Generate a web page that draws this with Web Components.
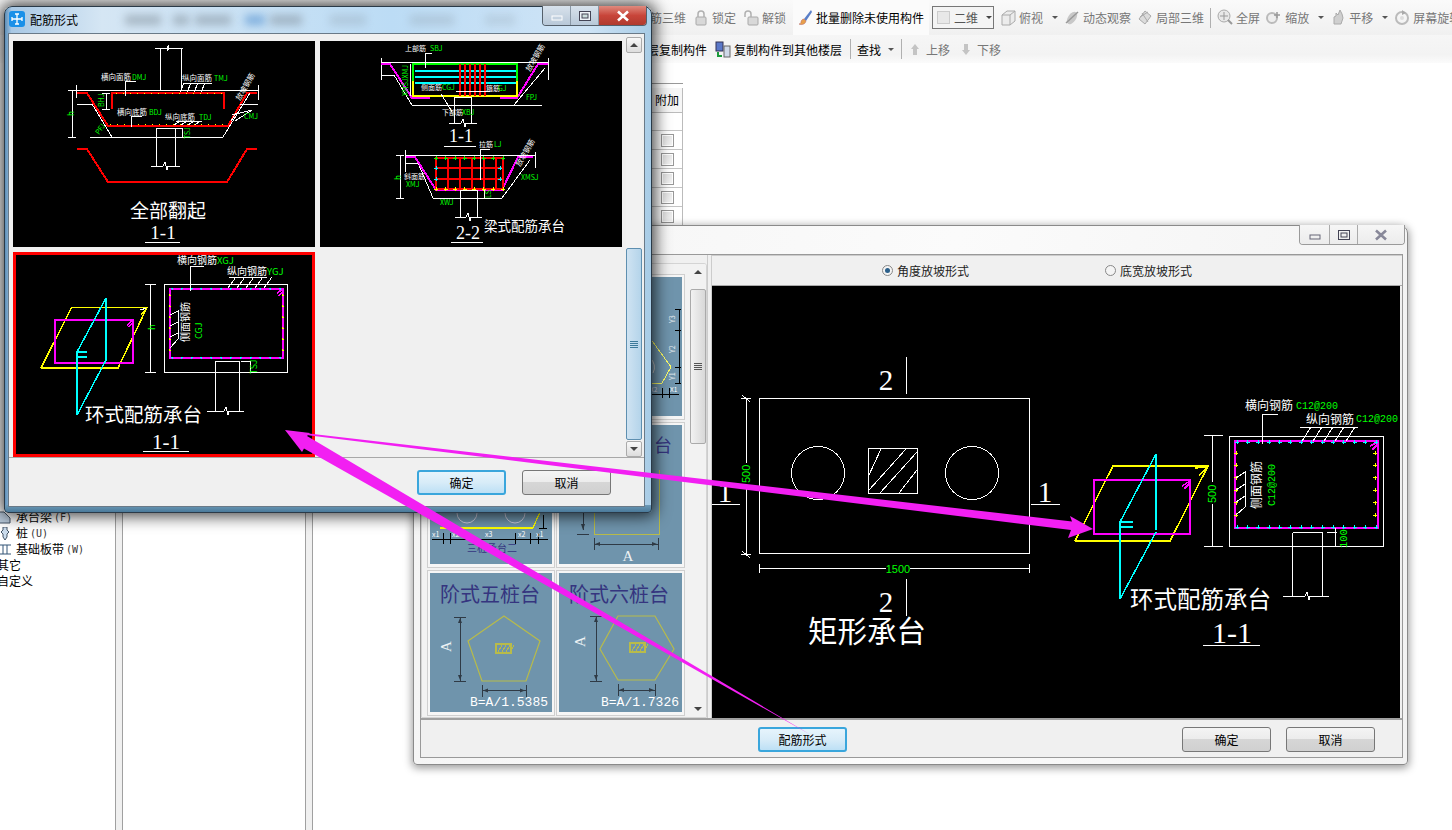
<!DOCTYPE html>
<html lang="zh">
<head>
<meta charset="utf-8">
<title>配筋形式</title>
<style>
    html, body { margin: 0; padding: 0; width: 1452px; height: 830px; overflow: hidden; background: #fff; }
    body { position: relative; font: 12px "Noto Sans CJK SC", "Liberation Sans", sans-serif; color: #000; }
</style>
</head>
<body>
<app-backdrop></app-backdrop>

<win-frame title-text="" style="left:413px;top:225px;width:995px;height:540px;z-index:2">
    <main-form></main-form>
</win-frame>

<win-frame active title-text="配筋形式" style="left:4px;top:6px;width:648px;height:507px;z-index:3">
    <rebar-picker></rebar-picker>
</win-frame>

<mark-arrows></mark-arrows>

<script>
const CJK = '"Noto Sans CJK SC", sans-serif';
const WHITE = '#fff', GREEN = '#00ff00', RED = '#ff0000', MAG = '#ff00ff', CYAN = '#00ffff', YEL = '#ffff00';

// small svg helpers, all coordinates are page coordinates (viewBox does the offset)
function t(x, y, str, size, color, rot, anchor, family) {
    const tr = rot ? ` transform="rotate(${rot} ${x} ${y})"` : '';
    return `<text x="${x}" y="${y}" font-size="${size}" fill="${color || WHITE}" text-anchor="${anchor || 'start'}" font-family='${family || CJK}'${tr}>${str}</text>`;
}
function pl(points, color, width, extra) {
    return `<polyline points="${points}" fill="none" stroke="${color || WHITE}" stroke-width="${width || 1}" ${extra || ''}/>`;
}
function rc(x, y, w, h, color, width) {
    return `<rect x="${x}" y="${y}" width="${w}" height="${h}" fill="none" stroke="${color || WHITE}" stroke-width="${width || 1}"/>`;
}
function dots(x1, y1, x2, y2, n, color, s) {
    let out = '';
    for (let i = 0; i < n; i++) {
        const x = x1 + (x2 - x1) * i / (n - 1), y = y1 + (y2 - y1) * i / (n - 1);
        out += `<path d="M${x - s} ${y}H${x + s}M${x} ${y - s}V${y + s}" stroke="${color}" stroke-width="1"/>`;
    }
    return out;
}
function pileBreak(x1, x2, y, mid) {
    return pl(`${x1},${y} ${mid - 2},${y} ${mid},${y - 4} ${mid + 2},${y + 4} ${mid + 3},${y} ${x2},${y}`);
}
function hatchTicks(x, y, n, step, dx, dy) {
    let s = '';
    for (let i = 0; i < n; i++) s += pl(`${x + i * step},${y} ${x + i * step - dx},${y + dy}`);
    return s;
}

const DRAWINGS = {
    fullbend() {
        return pl('155,48 167,48 169,45 167,51 169,48 183,48') + pl('160,48 160,90') + pl('181,48 181,90')
            + pl('76,90 258,90') + pl('76,85 76,98') + pl('258,85 258,100')
            + pl('77,93 87,93 108,126 228,126 247,93 257,93', RED, 2)
            + pl('112,109 112,93 224,93 224,109', RED, 2)
            + pl('116,93.5 222,93.5', YEL, 1, 'stroke-dasharray="1 6"') + pl('110,124 226,124', YEL, 1, 'stroke-dasharray="1 6"')
            + pl('77,104 92,104 112,137') + pl('90,137 223,137 250,93') + pl('240,104 258,104') + pl('72,90 72,137') + pl('68,90 76,90') + pl('68,137 76,137')
            + pl('106,93 106,109') + pl('102,93 110,93') + pl('102,109 110,109')
            + pl('156,128 156,166') + pl('175,128 175,166') + pl('156,128 175,128') + pileBreak(151, 180, 166, 165)
            + pl('182,137 182,128 175,128') 
            + pl('125,96 125,81 136,81') + pl('180,92 184,83') + pl('187,92 191,83') + pl('194,92 198,83') + pl('201,92 205,83') + pl('183,83 212,83')
            + pl('131,127 131,116 142,116') + pl('174,125 180,121') + pl('181,125 187,121') + pl('188,125 194,121') + pl('195,125 200,121') + pl('176,121 202,121')
            + pl('231,121 236,113') + pl('235,121 252,110') + pl('232,115 252,110')
            + pl('77,149 87,149 108,182 227,182 247,149 257,149', RED, 2)
            + t(101, 80, '横向面筋', 7.5) + t(132, 80, 'DMJ', 7, GREEN)
            + t(182, 81, '纵向面筋', 7.5) + t(214, 81, 'TMJ', 7, GREEN)
            + t(117, 115, '横向底筋', 7.5) + t(149, 115, 'BDJ', 7, GREEN)
            + t(165, 120, '纵向底筋', 7.5) + t(199, 120, 'TDJ', 7, GREEN)
            + t(244, 119, 'CMJ', 7, GREEN)
            + t(104, 107, 'BHJ', 7, GREEN, -90) + t(74, 116, 'h', 8, GREEN, -90)
            + t(99, 135, 'PFJ', 7, GREEN, -55) + t(190, 139, 'TSJ', 7, GREEN, -90)
            + t(240, 101, '放坡钢筋', 7.5, WHITE, -60)
            + t(168, 218, '全部翻起', 19, WHITE, 0, 'middle')
            + t(163, 239, '1-1', 19, WHITE, 0, 'middle', '"Liberation Serif", serif')
            + pl('145,242 180,242');
    },
    beam() {
        let grid = '';
        for (const x of [448, 460, 472, 484, 496]) grid += pl(`${x},158 ${x},189`, RED, 1.5);
        for (const y of [168, 179]) grid += pl(`436,${y} 503,${y}`, RED, 1.5);
        let reds = '';
        for (const x of [460, 465, 470, 475, 480, 485]) reds += pl(`${x},64 ${x},96`, RED, 2);
        return pl('381,62 548,62') + pl('381,58 381,80') + pl('548,58 548,80') + pl('381,75 394,75 412,105 542,105') + pl('514,105 545,68')
            + pl('381,64 390,64 412,98 430,98', MAG, 2) + pl('500,98 517,98 538,64 548,64', MAG, 2)
            + pl('413,81 413,64 517,64 517,81', GREEN, 2) + pl('413,81 413,96 517,96 517,81', YEL, 2)
            + pl('415,71 516,71', CYAN, 2) + pl('415,77 516,77', CYAN, 2) + pl('415,83 516,83', CYAN, 2) + reds
            + pl('410,64 410,96') + pl('456,91 490,91') + pl('425,53 425,68') + pl('425,53 432,53') + pl('441,94 448,105 452,112')
            + pl('454,97 454,123') + pl('471,97 471,123') + pl('454,97 471,97') + pileBreak(449, 477, 123, 463)
            + t(405, 51, '上部筋', 7) + t(430, 51, 'SBJ', 7, GREEN) + t(421, 90, '侧面筋', 7) + t(442, 90, 'CGJ', 7, GREEN)
            + t(486, 91, '箍筋', 7) + t(498, 91, 'GJ', 7, GREEN) + t(526, 100, 'FPJ', 7, GREEN) + t(442, 115, '下部筋', 7) + t(462, 115, 'XBJ', 7, GREEN)
            + t(408, 96, 'XMSJXMJ', 7, GREEN, -90) + t(530, 72, '放坡钢筋', 7.5, WHITE, -60)
            + t(461, 142, '1-1', 18, WHITE, 0, 'middle', '"Liberation Serif", serif') + pl('444,146 476,146')
            // lower section
            + pl('405,155 535,155') + pl('405,150 405,172') + pl('535,152 535,168') + pl('405,163 418,163 433,198 502,198 530,160')
            + pl('406,157 415,157 436,190 502,190 518,157 533,157', MAG, 2)
            + rc(436, 158, 67, 31, RED, 2) + grid
            + dots(436, 158, 503, 158, 8, GREEN, 2) + dots(436, 189, 503, 189, 8, YEL, 2) + dots(436, 168, 436, 179, 2, CYAN, 2) + dots(500, 168, 500, 179, 2, CYAN, 2)
            + pl('480,180 480,149 490,149') + pl('400,155 400,198') + pl('396,155 404,155') + pl('396,198 404,198')
            + pl('460,190 460,217') + pl('477,190 477,217') + pl('460,190 477,190') + pileBreak(455, 482, 217, 468)
            + pl('484,190 484,198') + t(479, 147, '拉筋', 7) + t(494, 147, 'LJ', 7, GREEN) + t(404, 179, '斜面筋', 7) + t(406, 187, 'XMJ', 7, GREEN)
            + t(521, 180, 'XMSJ', 7, GREEN) + t(440, 205, 'XWJ', 7, GREEN) + t(491, 198, 'LS', 7, GREEN, -90) + t(401, 180, 'h', 8, GREEN, -90)
            + t(520, 167, '放坡钢筋', 7.5, WHITE, -60)
            + t(468, 239, '2-2', 18, WHITE, 0, 'middle', '"Liberation Serif", serif') + pl('451,242 483,242')
            + t(484, 231, '梁式配筋承台', 13.5);
    },
    ring() {
        return pl('41,368 118,368 147,307.5 71.5,307.5 41,368', YEL, 1.5) + pl('140,310 147,308') + pl('141,314 147,309', YEL, 1.5)
            + rc(55, 319.5, 78, 43, MAG, 2) + pl('127,325 133,320', MAG, 1.5) + pl('129,327 133,322', MAG, 1.5)
            + pl('106,298 106,360', CYAN, 1.5) + pl('106,298 77,352 77,415 106,360', CYAN, 1.5) + pl('77,352 87,352', CYAN, 1.5) + pl('77,357 87,357', CYAN, 1.5)
            + pl('150,284 150,372') + pl('145,284 156,284') + pl('145,372 156,372') + t(155, 330, 'h', 9, GREEN, -90)
            + rc(164.5, 284.5, 123, 87.5)
            + rc(169.5, 288.5, 113, 69, MAG, 2) + pl('277,293 283,289', MAG, 1.5) + pl('279,296 283,291', MAG, 1.5)
            + dots(172, 288.5, 280, 288.5, 12, CYAN, 1) + dots(172, 357.5, 280, 357.5, 12, CYAN, 1) + dots(169.5, 295, 169.5, 350, 6, YEL, 1) + dots(282.5, 295, 282.5, 350, 6, YEL, 1)
            + pl('215,361 215,411') + pl('239,361 239,411') + pl('215,361 239,361') + pileBreak(207, 244, 411, 226)
            + pl('241,361 250,361') + pl('250,361 250,372')
            + pl('190,291 190,266 204,266') + pl('229,277 267,277') + hatchTicks(228, 288, 5, 9, -8, -11)
            + pl('170,315 178,311 178,339 170,348') + pl('170,326 178,322') + pl('170,337 178,333')
            + t(177, 264, '横向钢筋', 10) + t(217, 264, 'XGJ', 9.5, GREEN)
            + t(227, 275, '纵向钢筋', 10) + t(267, 275, 'YGJ', 9.5, GREEN)
            + t(189, 342, '侧面钢筋', 10, WHITE, -90) + t(202, 339, 'CGJ', 9, GREEN, -90) + t(257, 374, 'TSJ', 8.5, GREEN, -90)
            + t(85, 422, '环式配筋承台', 19.5)
            + t(166, 449, '1-1', 21, WHITE, 0, 'middle', '"Liberation Serif", serif') + pl('143,451 189,451');
    },
    preview() {
        let hatch = '';
        for (const [a, b, c, d] of [[869, 475, 881, 449], [869, 490, 906, 449], [880, 493, 917, 452], [899, 493, 917, 470]]) hatch += pl(`${a},${b} ${c},${d}`);
        return rc(759.5, 398.5, 270, 155) + `<circle cx="818" cy="473" r="26.5" fill="none" stroke="#fff"/><circle cx="972" cy="473" r="26.5" fill="none" stroke="#fff"/>`
            + rc(868.5, 448.5, 49, 45) + hatch
            + pl('746,398 746,554') + pl('741,398 751,398') + pl('741,554 751,554') + pl('742,395 750,402') + pl('742,551 750,558')
            + pl('759,568.5 1030,568.5') + pl('759.5,564 759.5,573') + pl('1029.5,564 1029.5,573')
            + `<rect x="886" y="562" width="24" height="12" fill="#000"/>`
            + `<rect x="740" y="463" width="12" height="22" fill="#000"/>`
            + t(750, 483, '500', 11, GREEN, -90, 'start', '"Liberation Sans", sans-serif') + t(898, 572.5, '1500', 11, GREEN, 0, 'middle', '"Liberation Sans", sans-serif')
            + pl('906.5,357 906.5,394') + pl('906.5,579 906.5,616') + pl('712,504 740,504') + pl('1031,504 1060,504')
            + t(886, 390, '2', 29, WHITE, 0, 'middle', '"Liberation Serif", serif') + t(886, 612, '2', 29, WHITE, 0, 'middle', '"Liberation Serif", serif')
            + t(725, 502, '1', 29, WHITE, 0, 'middle', '"Liberation Serif", serif') + t(1045, 502, '1', 29, WHITE, 0, 'middle', '"Liberation Serif", serif')
            + t(808, 642, '矩形承台', 29.5)
            // ring detail on the right
            + pl('1075,541 1170,541 1208,466 1113,466 1075,541', YEL, 1.5) + pl('1195,468 1207,467', YEL, 1.5) + pl('1199,475 1207,468', YEL, 1.5)
            + rc(1094, 480, 96, 54, MAG, 2) + pl('1182,486 1190,481', MAG, 1.5) + pl('1184,489 1190,483', MAG, 1.5)
            + pl('1156,454 1156,530', CYAN, 1.5) + pl('1156,454 1120,522 1120,599 1156,532', CYAN, 1.5) + pl('1120,522 1133,522', CYAN, 1.5) + pl('1120,527 1133,527', CYAN, 1.5)
            + pl('1212,435 1212,546') + pl('1204,435 1223,435') + pl('1204,546 1223,546') + `<rect x="1206" y="482" width="12" height="22" fill="#000"/>`
            + t(1216, 503, '500', 11, GREEN, -90, 'start', '"Liberation Sans", sans-serif')
            + rc(1229.5, 436.5, 154, 110) + rc(1235, 441, 143, 87, MAG, 2) + pl('1370,446 1378,442', MAG, 1.5) + pl('1372,450 1378,444', MAG, 1.5)
            + dots(1237, 442, 1376, 442, 14, CYAN, 2) + dots(1237, 527, 1376, 527, 14, CYAN, 2) + dots(1236, 453, 1236, 515, 6, YEL, 2) + dots(1375, 453, 1375, 515, 6, YEL, 2)
            + pl('1292.5,532.5 1292.5,596') + pl('1322.5,532.5 1322.5,596') + pl('1292.5,532.5 1322.5,532.5') + pileBreak(1283, 1329, 596, 1307)
            + pl('1327,532 1337,532') + pl('1335,528 1335,546')
            + pl('1262,444 1262,414 1278,414') + pl('1300,427 1358,427') + hatchTicks(1302, 441, 5, 11, -9, -14)
            + pl('1236,478 1245,472 1245,507 1236,515') + pl('1236,490 1245,484') + pl('1236,502 1245,496')
            + t(1245, 410, '横向钢筋', 12) + t(1296, 409, 'C12@200', 10, GREEN, 0, 'start', '"Liberation Mono", monospace')
            + t(1306, 424, '纵向钢筋', 12) + t(1356, 422, 'C12@200', 10, GREEN, 0, 'start', '"Liberation Mono", monospace')
            + t(1261, 509, '侧面钢筋', 12, WHITE, -90) + t(1275, 506, 'C12@200', 10, GREEN, -90, 'start', '"Liberation Mono", monospace')
            + t(1347, 548, '100', 10.5, GREEN, -90, 'start', '"Liberation Mono", monospace')
            + t(1130, 608, '环式配筋承台', 23.5)
            + t(1232, 643, '1-1', 30, WHITE, 0, 'middle', '"Liberation Serif", serif') + pl('1203,645 1260,645');
    }
};

// thumbnails in the left list of the back window, again in page coordinates
const OLIVE = '#b8bb4a', DARK = '#2f3a45', NAVY = '#35357f';
function dimV(x, y1, y2) { return pl(`${x},${y1} ${x},${y2}`, DARK, 1) + pl(`${x - 6},${y1} ${x + 6},${y1}`, DARK) + pl(`${x - 6},${y2} ${x + 6},${y2}`, DARK) + `<path d="M${x - 2} ${y1 + 6}L${x} ${y1 + 1}L${x + 2} ${y1 + 6}ZM${x - 2} ${y2 - 6}L${x} ${y2 - 1}L${x + 2} ${y2 - 6}Z" fill="${DARK}"/>`; }
function dimH(y, x1, x2) { return pl(`${x1},${y} ${x2},${y}`, DARK, 1) + pl(`${x1},${y - 6} ${x1},${y + 6}`, DARK) + pl(`${x2},${y - 6} ${x2},${y + 6}`, DARK) + `<path d="M${x1 + 6} ${y - 2}L${x1 + 1} ${y}L${x1 + 6} ${y + 2}ZM${x2 - 6} ${y - 2}L${x2 - 1} ${y}L${x2 - 6} ${y + 2}Z" fill="${DARK}"/>`; }
function hatchBox(x, y, w, h) {
    let s = `<rect x="${x}" y="${y}" width="${w}" height="${h}" fill="none" stroke="${OLIVE}" stroke-width="1.5"/>`;
    for (let i = 0; i < 4; i++) s += pl(`${x + 2 + i * 4},${y + h - 1} ${x + 6 + i * 4},${y + 1}`, OLIVE);
    return s;
}
const THUMBS = {
    rowOneRight: { box: '561 277 122 139', svg: () =>
        pl('652,338 673,367 664,383 652,383', '#ffff66') + pl('681,309 681,383', '#000') + pl('677,309 684,309', '#000') + pl('677,330 684,330', '#000') + pl('677,367 684,367', '#000') + pl('677,383 684,383', '#000')
        + pl('652,394 681,394', '#000') + pl('664,388 664,398', '#000') + pl('671,388 671,398', '#000')
        + `<path d="M652 358 A12 12 0 0 1 655 373" fill="none" stroke="#ccc"/>`
        + t(677, 323, 'Y3', 7, '#e8eef2', -90) + t(677, 353, 'Y2', 7, '#e8eef2', -90) + t(677, 380, 'Y1', 7, '#e8eef2', -90) + t(672, 392, 'X1', 6.5, '#fff') + t(652, 392, 'X2', 6.5, '#dde') },
    threePile: { box: '430 425 122 139', svg: () =>
        pl('440,528 533,528 540,512', YEL, 1.2) + `<path d="M457 513 A10 10 0 0 0 477 513M505 513 A10 10 0 0 0 525 513" fill="none" stroke="#ccd"/>`
        + pl('432,539 548,539', '#000') + pl('443,533 443,544', '#000') + pl('450,533 450,544', '#000') + pl('515,533 515,544', '#000') + pl('530,533 530,544', '#000') + pl('538,533 538,544', '#000')
        + pl('543,515 543,528', '#000') + pl('539,528 547,528', '#000')
        + t(432, 537, 'x1', 7, '#fff') + t(452, 537, 'x2', 7, '#fff') + t(485, 537, 'x3', 7, '#fff') + t(518, 537, 'x2', 7, '#fff') + t(536, 537, 'x1', 7, '#fff')
        + t(492, 552, '三桩承台二', 10, NAVY, 0, 'middle') },
    rectA: { box: '561 425 122 139', svg: () =>
        t(656, 452, '台', 18, NAVY) + pl('596,510 596,534 661,534 661,470', OLIVE, 1) + pl('585,500 585,530', DARK) + pl('579,534 591,534', DARK) + `<path d="M583 524L585 530L587 524Z" fill="${DARK}"/>`
        + dimH(544, 596, 660) + t(630, 561, 'A', 15, '#eef2f4', 0, 'middle', '"Liberation Serif", serif') },
    pentagon: { box: '430 573 122 139', svg: () =>
        t(440, 602, '阶式五桩台', 20, NAVY)
        + `<polygon points="504,616 540,641 526,681 482,681 468,641" fill="none" stroke="${OLIVE}" stroke-width="1.2"/>` + hatchBox(496, 644, 15, 9)
        + dimV(460, 617, 681) + dimH(690.5, 482, 526)
        + t(451, 652, 'A', 15, '#eef2f4', -90, 'start', '"Liberation Serif", serif')
        + t(470, 706, 'B=A/1.5385', 13, '#fff', 0, 'start', '"Liberation Mono", monospace') },
    hexagon: { box: '561 573 122 139', svg: () =>
        t(571, 602, '阶式六桩台', 20, NAVY)
        + `<polygon points="620,616 657,616 676,649 657,680 620,680 602,649" fill="none" stroke="${OLIVE}" stroke-width="1.2"/>` + hatchBox(632, 643, 15, 9)
        + dimV(598, 616, 681) + dimH(690, 620, 657)
        + t(587, 647, 'A', 15, '#eef2f4', -90, 'start', '"Liberation Serif", serif')
        + t(603, 706, 'B=A/1.7326', 13, '#fff', 0, 'start', '"Liberation Mono", monospace') }
};

const ICONS = {
    lock: '<rect x="3" y="8" width="10" height="8" rx="1" fill="#d8d8d8" stroke="#a8a8a8"/><path d="M5 8V5a3 3 0 0 1 6 0v3" fill="none" stroke="#b0b0b0" stroke-width="1.5"/>',
    unlock: '<rect x="5" y="8" width="10" height="8" rx="1" fill="#d8d8d8" stroke="#a8a8a8"/><path d="M2 8V5a3 3 0 0 1 6 0v3" fill="none" stroke="#b0b0b0" stroke-width="1.5"/>',
    brush: '<path d="M14 1L7 10l2 2 6-9z" fill="#5a7fc8"/><path d="M7 10c-2 0-3 2-3 3s-1 2-2 2c2 1 6 1 7-3z" fill="#e8a04c" stroke="#b06060" stroke-width=".5"/>',
    cube: '<path d="M2 6L7 2h8v10l-5 4H2z" fill="#ececec" stroke="#aaa"/><path d="M2 6h8v10M10 6l5-4" fill="none" stroke="#aaa"/>',
    orbit: '<ellipse cx="8" cy="9" rx="4" ry="7" transform="rotate(35 8 9)" fill="#c8c8c8"/><path d="M2 14L14 3" stroke="#999" stroke-width="1.5"/>',
    part3d: '<path d="M8 2l6 5-6 8-6-5z" fill="#dcdcdc" stroke="#aaa"/><path d="M5 4l6 9M3 8l8-5" stroke="#aaa" fill="none"/>',
    zoomfit: '<circle cx="7" cy="7" r="6" fill="#e8e8e8" stroke="#aaa"/><path d="M7 3v8M3 7h8" stroke="#999"/><path d="M11 11l4 4" stroke="#999" stroke-width="2"/>',
    zoom: '<circle cx="6" cy="9" r="5" fill="#eee" stroke="#bbb" stroke-width="2"/><path d="M11 3v6M8 6h6" stroke="#999" stroke-width="1.5"/>',
    pan: '<path d="M4 15V8l2-1V4l2 2 2-5 2 4 1 4-2 6z" fill="#cfcfcf" stroke="#aaa"/>',
    rotate: '<circle cx="8" cy="9" r="6" fill="none" stroke="#bbb" stroke-width="2"/><path d="M8 1l4 3-4 2z" fill="#aaa"/><circle cx="8" cy="9" r="2" fill="#ddd"/>',
    copyfloor: '<rect x="1" y="1" width="7" height="9" fill="#5a78c8" stroke="#335"/><rect x="9" y="5" width="6" height="11" fill="#cfd8e8" stroke="#666"/><path d="M3 11v4h4" stroke="#1a9a3a" stroke-width="2" fill="none"/>',
    up: '<path d="M8 3l4 5h-2v6H6V8H4z" fill="#c4c4c4"/>',
    down: '<path d="M8 14l4-5h-2V3H6v6H4z" fill="#c4c4c4"/>'
};

class ToolItem extends HTMLElement {
    connectedCallback() {
        const icon = this.getAttribute('icon');
        const off = this.hasAttribute('off');
        this.attachShadow({ mode: 'open' }).innerHTML = `
            <style>
                :host { display: inline-flex; align-items: center; gap: 3px; flex: none; white-space: nowrap; font-size: 12px; color: ${off ? '#777' : '#000'}; }
                svg { width: 16px; height: 17px; flex: none; }
                .caret { margin-left: var(--caret-gap, 6px); width: 0; height: 0; border: 3px solid transparent; border-top: 3px solid #555; border-bottom: 0; }
            </style>
            ${icon ? `<svg viewBox="0 0 16 17">${ICONS[icon]}</svg>` : ''}
            <slot></slot>
            ${this.hasAttribute('caret') ? '<span class="caret"></span>' : ''}
        `;
    }
}
customElements.define('tool-item', ToolItem);

class AppBackdrop extends HTMLElement {
    connectedCallback() {
        this.attachShadow({ mode: 'open' }).innerHTML = `
            <style>
                :host { display: block; position: absolute; left: 0; top: 0; width: 1452px; height: 830px; overflow: hidden; background: #fff; }
                .bar { height: 35px; display: flex; align-items: center; padding-left: 650px; background: linear-gradient(#fafafa, #f0f0f0); gap: 6px; box-sizing: border-box; overflow: hidden; }
                .bar .lead { margin-left: 1px; }
                .bar2 { height: 28px; display: flex; align-items: center; padding-left: 647px; background: linear-gradient(#f6f6f6, #f3f3f3 70%, #fbfbfb); gap: 8px; box-sizing: border-box; --caret-gap: 4px; }
                .sep { width: 1px; height: 20px; background: #b0b0b0; flex: none; }
                .bar2 .tight { margin-left: -2px; }
                .bar2 .tighter { margin-left: -3px; }
                .combo { flex: none; width: 56px; height: 21px; border: 1px solid #777; display: flex; align-items: center; gap: 4px; padding-left: 4px; font-size: 12px; color: #555; box-sizing: content-box; background: #f4f4f4; }
                .combo i { width: 13px; height: 13px; background: #e8e8e8; border: 1px solid #ccc; box-sizing: border-box; }
                .combo b { margin-left: 4px; border: 3px solid transparent; border-top: 3px solid #444; border-bottom: 0; }
                .hi { background: #fbfbfb; align-self: stretch; padding: 0 5px 0 4px; margin: 0 -3px 0 1px; }
                .body { display: grid; grid-template-columns: 115px 8px 182px 8px 1fr; height: 767px; }
                .tree { padding-top: 446px; font-size: 12px; line-height: 16px; overflow: hidden; }
                .tree div { display: flex; align-items: center; gap: 5px; height: 16px; white-space: nowrap; }
                .tree .leaf { margin-left: -1px; }
                .tree .plain { margin-left: -3px; }
                .tree small { font: 10px "DejaVu Sans Mono", monospace; color: #333; margin-left: -3px; }
                .tree svg { width: 12px; height: 13px; flex: none; }
                .split { background: #f0f0f0; border-left: 1px solid #a0a0a0; border-right: 1px solid #a0a0a0; box-sizing: border-box; }
                .grid { padding-top: 20px; }
            </style>
            <div class="bar">
                <tool-item off>筋三维</tool-item>
                <tool-item class="lead" off icon="lock">锁定</tool-item>
                <tool-item class="lead" off icon="unlock">解锁</tool-item>
                <tool-item class="hi" icon="brush">批量删除未使用构件</tool-item>
                <span class="combo"><i></i>二维<b></b></span>
                <tool-item off icon="cube" caret>俯视</tool-item>
                <tool-item off icon="orbit">动态观察</tool-item>
                <tool-item off icon="part3d">局部三维</tool-item>
                <span class="sep"></span>
                <tool-item off icon="zoomfit">全屏</tool-item>
                <tool-item off icon="zoom" caret>缩放</tool-item>
                <tool-item off icon="pan" caret>平移</tool-item>
                <tool-item off icon="rotate">屏幕旋转</tool-item>
            </div>
            <div class="bar2">
                <tool-item>层复制构件</tool-item>
                <tool-item icon="copyfloor">复制构件到其他楼层</tool-item>
                <span class="sep"></span>
                <tool-item class="tight" caret>查找</tool-item>
                <span class="sep" style="margin-left:-1px"></span>
                <tool-item class="tighter" off icon="up">上移</tool-item>
                <tool-item off icon="down">下移</tool-item>
            </div>
            <div class="body">
                <div class="tree">
                    <div class="leaf"><svg viewBox="0 0 12 13"><path d="M0 1h5l6 6v5H0z" fill="#bcd" stroke="#456"/></svg>承台梁<small>(F)</small></div>
                    <div class="leaf"><svg viewBox="0 0 12 13"><path d="M4 0h4v3l2 2-2 2v3l-2 3-2-3V7L2 5l2-2z" fill="#cde" stroke="#456"/></svg>桩<small>(U)</small></div>
                    <div class="leaf"><svg viewBox="0 0 12 13"><path d="M0 2h12M0 11h12M4 2v9M8 2v9" stroke="#357" fill="none"/></svg>基础板带<small>(W)</small></div>
                    <div class="plain">其它</div>
                    <div class="plain">自定义</div>
                </div>
                <div class="split"></div>
                <div></div>
                <div class="split"></div>
                <div class="grid"><attr-table></attr-table></div>
            </div>
        `;
    }
}
customElements.define('app-backdrop', AppBackdrop);

class AttrTable extends HTMLElement {
    connectedCallback() {
        const rows = [18, 19, 19, 19, 19, 19].map((h, i) => `
            <div class="row" style="height:${h}px">${i ? '<span class="box"></span>' : ''}</div>`).join('');
        this.attachShadow({ mode: 'open' }).innerHTML = `
            <style>
                :host { display: block; width: 370px; border-top: 1px solid #999; padding-top: 4px; }
                .col { border-right: 1px solid #bbb; }
                .head { height: 24px; background: #f6f6f6; text-align: right; padding-right: 3px; line-height: 24px; font-size: 12px; border-bottom: 1px solid #bbb; box-sizing: content-box; }
                .row { border-bottom: 1px solid #c4c4c4; display: flex; align-items: center; justify-content: flex-end; padding-right: 8px; box-sizing: border-box; }
                .box { width: 13px; height: 13px; border: 1px solid #999; background: linear-gradient(135deg, #ddd, #f6f6f6); box-sizing: border-box; box-shadow: inset 0 0 0 1px #fff; }
            </style>
            <div class="col">
                <div class="head">附加</div>
                ${rows}
            </div>
        `;
    }
}
customElements.define('attr-table', AttrTable);

class WinFrame extends HTMLElement {
    connectedCallback() {
        const active = this.hasAttribute('active');
        const title = this.getAttribute('title-text');
        this.attachShadow({ mode: 'open' }).innerHTML = `
            <style>
                :host { display: flex; flex-direction: column; position: absolute; box-sizing: border-box; border-radius: 8px 8px 4px 4px;
                    border: 1px solid ${active ? '#2a3a48' : '#8a8a8a'};
                    box-shadow: ${active ? '0 0 16px 3px rgba(0,0,0,.75)' : '0 2px 8px 1px rgba(0,0,0,.4)'};
                    padding: ${active ? '27px 7px 6px 4px' : '29px 5px 7px 7px'};
                    background: ${active
                        ? 'linear-gradient(#6d9ab8, #4a7a9a) bottom / 100% 7px no-repeat, linear-gradient(90deg, #5d8fb8 0, #a9c8e4 1%, #d5e6f4 15%, #bcdcf5 60%, #cfe4f6 90%, #a8cce6 100%)'
                        : 'linear-gradient(100deg, #f4f4f4, #fbfbfb 50%, #f2f2f2)'};
                }
                .glass { position: absolute; left: 0; top: 0; right: 105px; height: 27px; overflow: hidden; border-radius: 8px 0 0 0; }
                .glass i { position: absolute; top: 8px; height: 10px; background: #7d8a95; opacity: .5; filter: blur(4px); }
                .title { position: absolute; left: 4px; top: 4px; display: flex; align-items: center; gap: 5px; font-size: 12px; height: 16px; }
                .title svg { width: 16px; height: 16px; }
                .caps { position: absolute; top: -1px; right: ${active ? '4px' : '2px'}; display: flex; height: 19px; border: 1px solid ${active ? '#55606b' : '#9a9a9a'}; border-top: 0; border-radius: 0 0 4px 4px; overflow: hidden; }
                .caps span { display: flex; align-items: center; justify-content: center; border-right: 1px solid ${active ? '#8a98a6' : '#aaa'}; background: ${active ? 'linear-gradient(#d8e2ec, #b8c8d8)' : 'linear-gradient(#f6f6f6, #ececec)'}; }
                .caps .x { border-right: 0; background: ${active ? 'linear-gradient(#e08a7e, #c8453a 50%, #b03a2e)' : 'linear-gradient(#f6f6f6, #ececec)'}; }
                .caps svg { width: 14px; height: 12px; }
                .in { flex: 1; min-height: 0; display: flex; background: #f0f0f0; ${active ? 'outline: 1px solid #6a7a88;' : 'outline: 1px solid #999;'} }
                ::slotted(*) { flex: 1; min-width: 0; }
            </style>
            ${active ? `<div class="glass">
                <i style="left:120px;width:36px"></i><i style="left:168px;width:16px"></i><i style="left:190px;width:36px"></i>
                <i style="left:240px;width:20px;background:#3a80c8"></i><i style="left:265px;width:32px"></i>
                <i style="left:325px;width:36px;opacity:.25"></i><i style="left:405px;width:44px;opacity:.25"></i><i style="left:480px;width:30px;opacity:.2"></i>
            </div>` : ''}
            ${title ? `<div class="title">
                <svg viewBox="0 0 16 16"><rect x="0" y="0" width="16" height="16" rx="3" fill="#1a90e8"/><path d="M8 3v10M3 8h10M6 3h4M6 13h4M3 6v4M13 6v4" stroke="#fff" stroke-width="1.3" fill="none"/></svg>
                <span>${title}</span></div>` : ''}
            <div class="caps">
                <span style="width:${active ? 27 : 29}px"><svg viewBox="0 0 14 12"><rect x="2" y="6" width="10" height="4" fill="none" stroke="${active ? '#fff' : '#667'}"/></svg></span>
                <span style="width:27px"><svg viewBox="0 0 14 12"><rect x="1.5" y="1.5" width="11" height="9" fill="${active ? '#eef3f8' : 'none'}" stroke="#445"/><rect x="4" y="4" width="6" height="4" fill="${active ? '#cdd' : 'none'}" stroke="#445"/></svg></span>
                <span class="x" style="width:${active ? 47 : 46}px"><svg viewBox="0 0 14 12"><path d="M2 1.5L12 10.5M12 1.5L2 10.5" stroke="${active ? '#fff' : '#889'}" stroke-width="2.6"/></svg></span>
            </div>
            <div class="in"><slot></slot></div>
        `;
    }
}
customElements.define('win-frame', WinFrame);

class CadPanel extends HTMLElement {
    connectedCallback() {
        const box = this.getAttribute('box');
        const [, , w, h] = box.split(' ');
        this.attachShadow({ mode: 'open' }).innerHTML = `
            <style>
                :host { display: block; background: #000; width: ${w}px; height: ${h}px; overflow: hidden; }
                svg { display: block; }
                polyline, rect, circle, path { shape-rendering: crispEdges; }
            </style>
            <svg width="${w}" height="${h}" viewBox="${box}">${DRAWINGS[this.getAttribute('kind')]()}</svg>
        `;
    }
}
customElements.define('cad-panel', CadPanel);

class ScrollBar extends HTMLElement {
    connectedCallback() {
        const active = this.hasAttribute('active');
        const before = this.getAttribute('before') || 0;
        const size = this.getAttribute('size') || 100;
        this.attachShadow({ mode: 'open' }).innerHTML = `
            <style>
                :host { display: flex; flex-direction: column; width: 16px; flex: none; box-sizing: border-box; background: #f2f2f2; }
                .btn { height: 16px; flex: none; display: flex; align-items: center; justify-content: center; ${active ? 'border: 1px solid #aaa; background: linear-gradient(#f8f8f8,#ddd); border-radius: 2px;' : ''} box-sizing: border-box; }
                .btn i { border: 4px solid transparent; }
                .up i { border-bottom: 4px solid #444; border-top: 0; }
                .dn i { border-top: 4px solid #444; border-bottom: 0; }
                .track { flex: 1; padding-top: ${before}px; }
                .thumb { height: ${size}px; border-radius: 2px; box-sizing: border-box; display: flex; align-items: center; justify-content: center;
                    border: 1px solid ${active ? '#5e8fb0' : '#aaa'};
                    background: ${active ? 'linear-gradient(90deg,#cfe3f2,#b4d4ea)' : 'linear-gradient(90deg,#f2f2f2,#d8d8d8)'}; }
                .thumb b { width: 8px; height: 7px; background: repeating-linear-gradient(${active ? '#3c7a9a' : '#555'} 0 1px, transparent 1px 2px); }
            </style>
            <div class="btn up"><i></i></div>
            <div class="track"><div class="thumb"><b></b></div></div>
            <div class="btn dn"><i></i></div>
        `;
    }
}
customElements.define('scroll-bar', ScrollBar);

class WinButton extends HTMLElement {
    connectedCallback() {
        const blue = this.hasAttribute('blue');
        this.attachShadow({ mode: 'open' }).innerHTML = `
            <style>
                :host { display: inline-flex; width: 89px; height: 25px; box-sizing: border-box; align-items: center; justify-content: center; font-size: 12px; border-radius: 3px; flex: none;
                    border: ${blue ? '2px solid #3aa6dc' : '1px solid #777'};
                    background: ${blue ? 'linear-gradient(#e6f4fc, #d8ecf8 50%, #bde0f5)' : 'linear-gradient(#f4f4f4, #ececec 48%, #d6d6d6 50%, #d0d0d0)'}; }
            </style>
            <slot></slot>
        `;
    }
}
customElements.define('win-button', WinButton);

class RebarPicker extends HTMLElement {
    connectedCallback() {
        this.attachShadow({ mode: 'open' }).innerHTML = `
            <style>
                :host { display: flex; flex-direction: column; background: #f0f0f0; }
                .top { height: 424px; display: flex; border-bottom: 1px solid #a8a8a8; box-sizing: border-box; padding: 7px 2px 0 4px; }
                .list { flex: 1; display: grid; grid-template-columns: 302px 302px; grid-template-rows: 206px 205px; gap: 5px; align-content: start; }
                .sel { box-sizing: border-box; border: 3px solid #ff0000; background: #000; overflow: hidden; }
                scroll-bar { margin-top: -4px; }
                .foot { flex: 1; display: flex; align-items: center; padding: 1px 0 0 408px; gap: 16px; }
            </style>
            <div class="top">
                <div class="list">
                    <cad-panel kind="fullbend" box="13 41 302 206"></cad-panel>
                    <cad-panel kind="beam" box="320 41 302 206"></cad-panel>
                    <div class="sel"><cad-panel kind="ring" box="16 255 296 199"></cad-panel></div>
                </div>
                <scroll-bar active before="195" size="192"></scroll-bar>
            </div>
            <div class="foot">
                <win-button blue>确定</win-button>
                <win-button>取消</win-button>
            </div>
        `;
    }
}
customElements.define('rebar-picker', RebarPicker);

class PileThumb extends HTMLElement {
    connectedCallback() {
        const th = THUMBS[this.getAttribute('kind')];
        this.attachShadow({ mode: 'open' }).innerHTML = `
            <style>
                :host { display: block; box-sizing: border-box; padding: 2px; border: 1px solid #cfcfcf; background: #f6f6f6; overflow: hidden; }
                .pic { background: #6f94ac; height: 139px; }
                svg { display: block; width: 122px; height: 139px; }
                polyline, rect { shape-rendering: crispEdges; }
            </style>
            <div class="pic">${th ? `<svg viewBox="${th.box}">${th.svg()}</svg>` : ''}</div>
        `;
    }
}
customElements.define('pile-thumb', PileThumb);

class MainForm extends HTMLElement {
    connectedCallback() {
        this.attachShadow({ mode: 'open' }).innerHTML = `
            <style>
                :host { display: flex; flex-direction: column; background: #f0f0f0; }
                .top { display: flex; height: 465px; border-bottom: 2px solid #a0a0a0; box-sizing: border-box; }
                .left { width: 287px; flex: none; display: flex; padding-top: 8px; box-sizing: border-box; border-right: 1px solid #ccc; margin-right: 3px; }
                .pane { flex: 1; display: flex; border: 1px solid #d4d4d4; border-radius: 3px 3px 0 0; overflow: hidden; background: #f2f2f2; }
                .thumbs { flex: 1; display: grid; grid-template-columns: 128px 129px; grid-auto-rows: 146px; gap: 2px 1px; padding: 10px 0 0 5px; overflow: hidden; align-content: start; }
                .right { flex: 1; display: flex; flex-direction: column; min-width: 0; border-top: 1px solid #ccc; border-left: 1px solid #ccc; }
                .modes { height: 30px; flex: none; display: flex; align-items: center; padding-left: 170px; gap: 136px; font-size: 12px; color: #222; box-sizing: border-box; border-bottom: 1px solid #aaa; }
                .modes label { display: inline-flex; align-items: center; gap: 4px; white-space: nowrap; }
                .radio { width: 11px; height: 11px; border: 1px solid #888; border-radius: 50%; background: #f4f4f4; box-sizing: border-box; display: inline-flex; align-items: center; justify-content: center; }
                .radio.on::after { content: ""; width: 5px; height: 5px; border-radius: 50%; background: #2b5f8a; }
                .foot { flex: 1; display: flex; align-items: center; padding: 1px 0 0 337px; }
                .foot .gap { flex: 1; }
                .foot win-button + win-button { margin-left: 15px; }
                .foot .end { margin-right: 27px; }
            </style>
            <div class="top">
                <div class="left">
                    <div class="pane">
                        <div class="thumbs">
                            <pile-thumb></pile-thumb><pile-thumb kind="rowOneRight"></pile-thumb>
                            <pile-thumb kind="threePile"></pile-thumb><pile-thumb kind="rectA"></pile-thumb>
                            <pile-thumb kind="pentagon"></pile-thumb><pile-thumb kind="hexagon"></pile-thumb>
                            <pile-thumb></pile-thumb><pile-thumb></pile-thumb>
                        </div>
                        <scroll-bar before="9" size="155"></scroll-bar>
                    </div>
                </div>
                <div class="right">
                    <div class="modes">
                        <label><span class="radio on"></span>角度放坡形式</label>
                        <label><span class="radio"></span>底宽放坡形式</label>
                    </div>
                    <cad-panel kind="preview" box="712 286 688 433"></cad-panel>
                </div>
            </div>
            <div class="foot">
                <win-button blue>配筋形式</win-button>
                <span class="gap"></span>
                <win-button>确定</win-button>
                <win-button class="end">取消</win-button>
            </div>
        `;
    }
}
customElements.define('main-form', MainForm);

class MarkArrows extends HTMLElement {
    connectedCallback() {
        this.attachShadow({ mode: 'open' }).innerHTML = `
            <style>
                :host { display: block; position: absolute; left: 0; top: 0; width: 1452px; height: 830px; z-index: 5; pointer-events: none; }
                svg { display: block; }
            </style>
            <svg width="1452" height="830" viewBox="0 0 1452 830">
                <polygon fill="#f21ff2" points="287,431 1072,521.5 1070,516 1093,529 1068,538 1071,530 310,435.5"/>
                <polygon fill="#f21ff2" points="285,430 310,433 307,436 811,735 304,448.4 302,452"/>
            </svg>
        `;
    }
}
customElements.define('mark-arrows', MarkArrows);
</script>
</body>
</html>
